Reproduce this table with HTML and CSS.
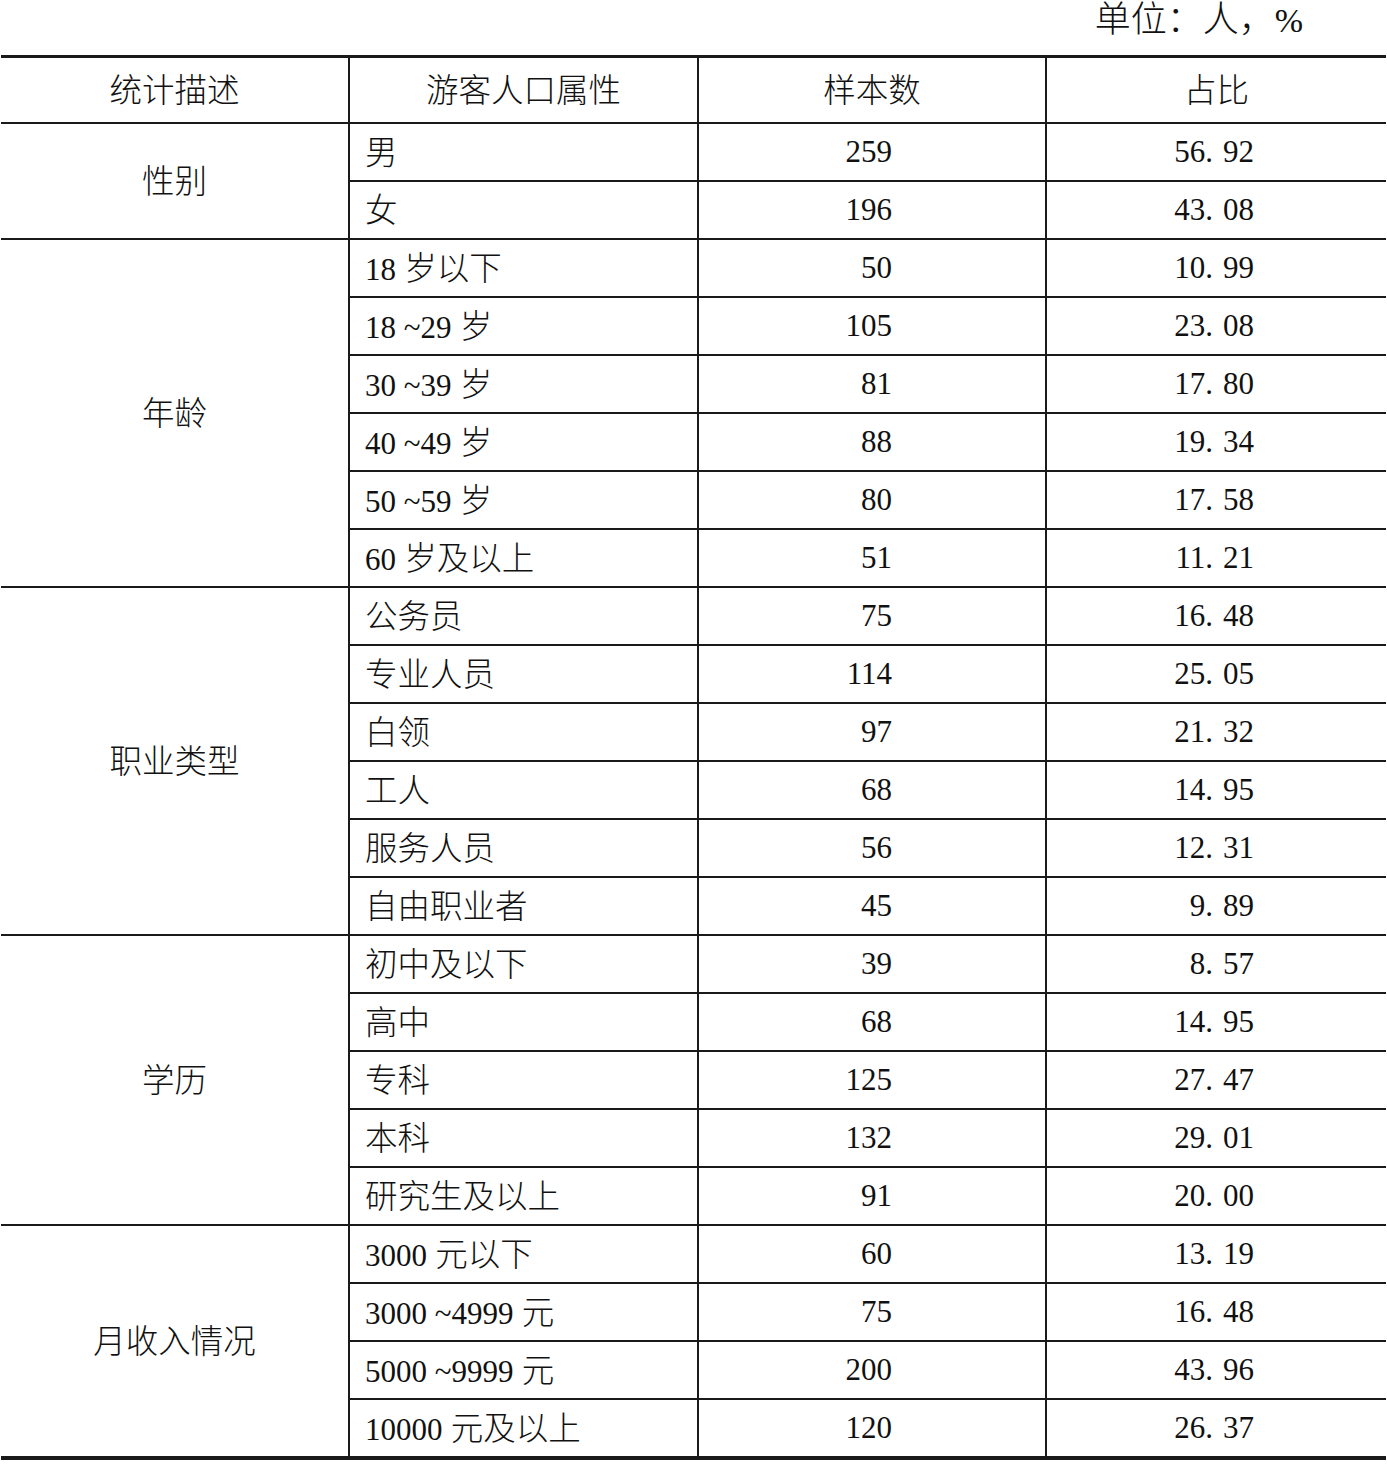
FILE: index.html
```html
<!DOCTYPE html>
<html lang="zh-CN">
<head>
<meta charset="utf-8">
<title>游客人口属性统计</title>
<link rel="stylesheet" href="styles.css">
</head>
<body>
<div class="page">
  <div class="unit">单位：人，<span class="n">%</span></div>
  <table class="stats">
    <colgroup>
      <col class="c1"><col class="c2"><col class="c3"><col class="c4">
    </colgroup>
    <thead>
      <tr><th>统计描述</th><th>游客人口属性</th><th>样本数</th><th>占比</th></tr>
    </thead>
    <tbody>
      <tr class="grp"><td class="cat" rowspan="2">性别</td><td class="attr">男</td><td class="num">259</td><td class="pct">56<span class="dot">.</span>92</td></tr>
      <tr><td class="attr">女</td><td class="num">196</td><td class="pct">43<span class="dot">.</span>08</td></tr>

      <tr class="grp"><td class="cat" rowspan="6">年龄</td><td class="attr"><span class="n">18</span> 岁以下</td><td class="num">50</td><td class="pct">10<span class="dot">.</span>99</td></tr>
      <tr><td class="attr"><span class="n">18 ~29</span> 岁</td><td class="num">105</td><td class="pct">23<span class="dot">.</span>08</td></tr>
      <tr><td class="attr"><span class="n">30 ~39</span> 岁</td><td class="num">81</td><td class="pct">17<span class="dot">.</span>80</td></tr>
      <tr><td class="attr"><span class="n">40 ~49</span> 岁</td><td class="num">88</td><td class="pct">19<span class="dot">.</span>34</td></tr>
      <tr><td class="attr"><span class="n">50 ~59</span> 岁</td><td class="num">80</td><td class="pct">17<span class="dot">.</span>58</td></tr>
      <tr><td class="attr"><span class="n">60</span> 岁及以上</td><td class="num">51</td><td class="pct">11<span class="dot">.</span>21</td></tr>

      <tr class="grp"><td class="cat" rowspan="6">职业类型</td><td class="attr">公务员</td><td class="num">75</td><td class="pct">16<span class="dot">.</span>48</td></tr>
      <tr><td class="attr">专业人员</td><td class="num">114</td><td class="pct">25<span class="dot">.</span>05</td></tr>
      <tr><td class="attr">白领</td><td class="num">97</td><td class="pct">21<span class="dot">.</span>32</td></tr>
      <tr><td class="attr">工人</td><td class="num">68</td><td class="pct">14<span class="dot">.</span>95</td></tr>
      <tr><td class="attr">服务人员</td><td class="num">56</td><td class="pct">12<span class="dot">.</span>31</td></tr>
      <tr><td class="attr">自由职业者</td><td class="num">45</td><td class="pct">9<span class="dot">.</span>89</td></tr>

      <tr class="grp"><td class="cat" rowspan="5">学历</td><td class="attr">初中及以下</td><td class="num">39</td><td class="pct">8<span class="dot">.</span>57</td></tr>
      <tr><td class="attr">高中</td><td class="num">68</td><td class="pct">14<span class="dot">.</span>95</td></tr>
      <tr><td class="attr">专科</td><td class="num">125</td><td class="pct">27<span class="dot">.</span>47</td></tr>
      <tr><td class="attr">本科</td><td class="num">132</td><td class="pct">29<span class="dot">.</span>01</td></tr>
      <tr><td class="attr">研究生及以上</td><td class="num">91</td><td class="pct">20<span class="dot">.</span>00</td></tr>

      <tr class="grp"><td class="cat" rowspan="4">月收入情况</td><td class="attr"><span class="n">3000</span> 元以下</td><td class="num">60</td><td class="pct">13<span class="dot">.</span>19</td></tr>
      <tr><td class="attr"><span class="n">3000 ~4999</span> 元</td><td class="num">75</td><td class="pct">16<span class="dot">.</span>48</td></tr>
      <tr><td class="attr"><span class="n">5000 ~9999</span> 元</td><td class="num">200</td><td class="pct">43<span class="dot">.</span>96</td></tr>
      <tr class="last"><td class="attr"><span class="n">10000</span> 元及以上</td><td class="num">120</td><td class="pct">26<span class="dot">.</span>37</td></tr>
    </tbody>
  </table>
</div>
</body>
</html>
```

FILE: styles.css
```css
html, body {
  margin: 0;
  padding: 0;
  background: #ffffff;
}

body {
  font-family: "Liberation Serif", "Noto Sans CJK SC", serif;
  font-weight: 300;
  color: #111111;
}

.page {
  width: 1387px;
  padding-left: 1px;
  box-sizing: border-box;
}

.unit {
  height: 55px;
  box-sizing: border-box;
  text-align: right;
  padding-right: 84px;
  font-size: 36px;
  line-height: 40px;
}

.unit .n {
  font-size: 34px;
}

.stats {
  border-collapse: collapse;
  width: 1385px;
  table-layout: fixed;
  font-size: 32.5px;
  border-top: 3px solid #1a1a1a;
  border-bottom: 4px solid #1a1a1a;
}

.c1 { width: 348px; }
.c2 { width: 349px; }
.c3 { width: 348px; }
.c4 { width: 340px; }

.stats th,
.stats td {
  padding: 0;
  border: 2px solid #1a1a1a;
  vertical-align: middle;
}

.stats th:first-child,
.stats td.cat {
  border-left: none;
}

.stats th:last-child,
.stats td.pct {
  border-right: none;
}

.stats th {
  font-weight: 300;
  height: 58px;
  padding-bottom: 6px;
  text-align: center;
}

.stats td {
  height: 56px;
}

.stats td.cat {
  text-align: center;
  padding-bottom: 5px;
}

.stats td.attr {
  text-align: left;
  padding-left: 15px;
  padding-bottom: 5px;
  height: 51px;
}

.stats td.num {
  font-size: 31px;
  text-align: right;
  padding-right: 153px;
}

.stats td.pct {
  font-size: 31px;
  text-align: right;
  padding-right: 132px;
}

.n {
  font-size: 31px;
}

.stats tr.last td {
  border-bottom: 4px solid #1a1a1a;
}

.dot {
  margin-right: 10px;
}
```
